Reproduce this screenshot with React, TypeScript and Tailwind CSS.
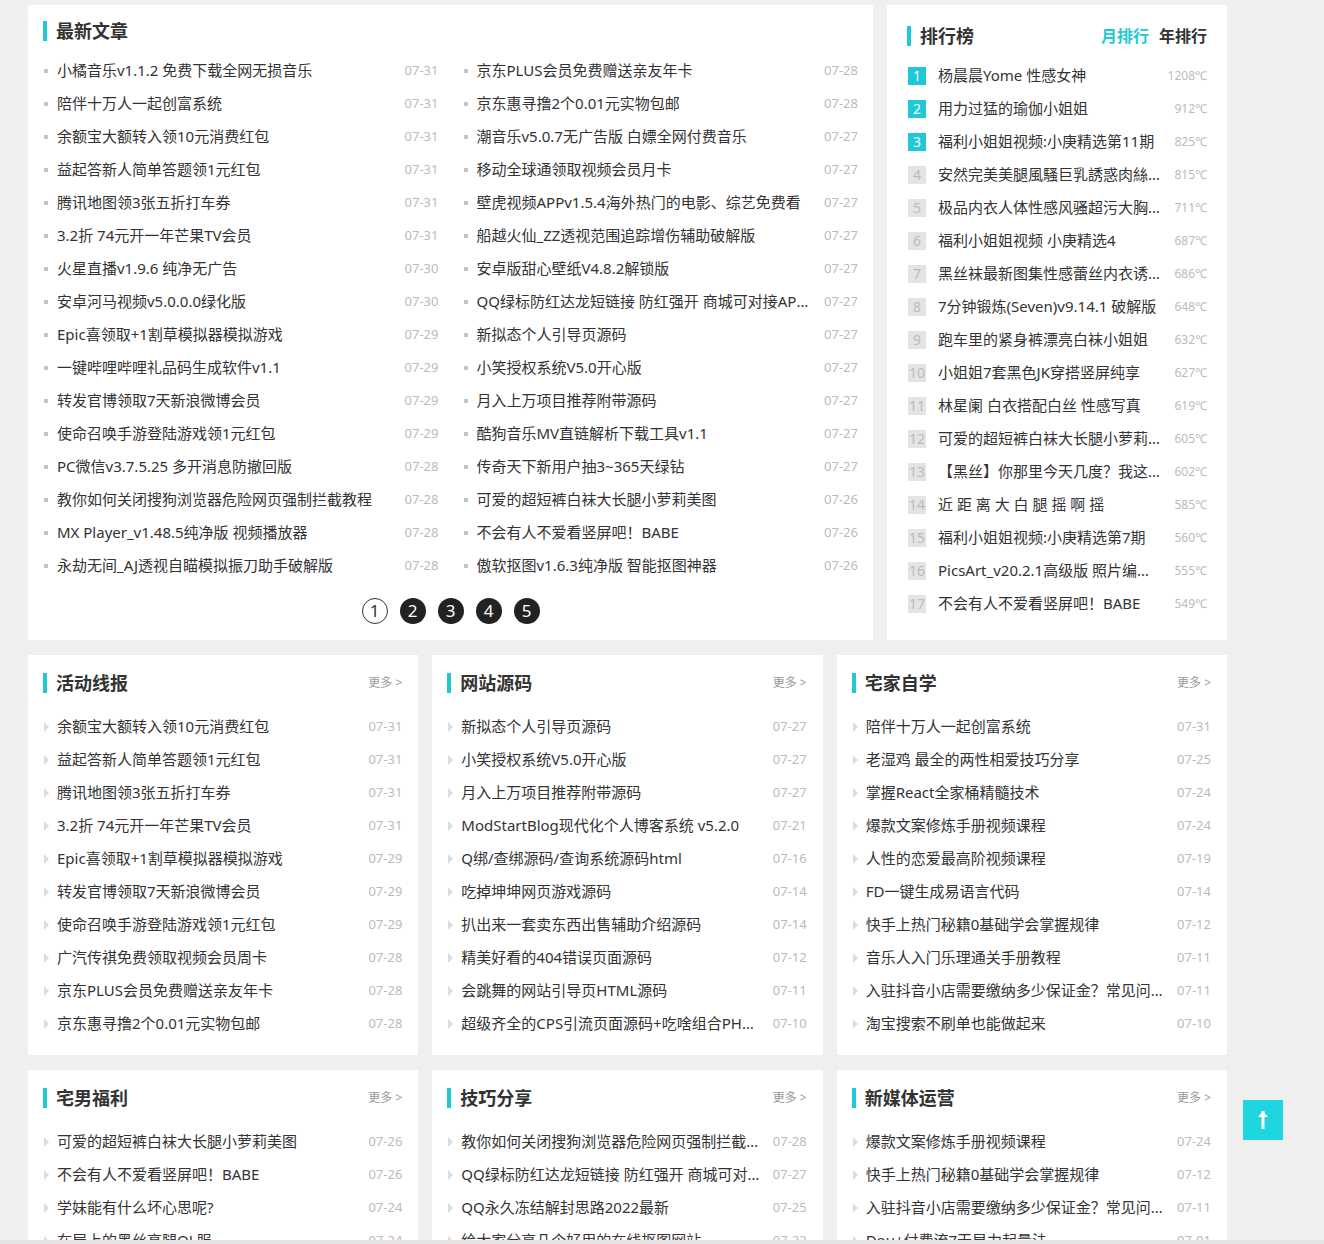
import React from 'react';

type Item = [string, string];

const latestLeft: Item[] = [
  ['小橘音乐v1.1.2 免费下载全网无损音乐', '07-31'],
  ['陪伴十万人一起创富系统', '07-31'],
  ['余额宝大额转入领10元消费红包', '07-31'],
  ['益起答新人简单答题领1元红包', '07-31'],
  ['腾讯地图领3张五折打车券', '07-31'],
  ['3.2折 74元开一年芒果TV会员', '07-31'],
  ['火星直播v1.9.6 纯净无广告', '07-30'],
  ['安卓河马视频v5.0.0.0绿化版', '07-30'],
  ['Epic喜领取+1割草模拟器模拟游戏', '07-29'],
  ['一键哔哩哔哩礼品码生成软件v1.1', '07-29'],
  ['转发官博领取7天新浪微博会员', '07-29'],
  ['使命召唤手游登陆游戏领1元红包', '07-29'],
  ['PC微信v3.7.5.25 多开消息防撤回版', '07-28'],
  ['教你如何关闭搜狗浏览器危险网页强制拦截教程', '07-28'],
  ['MX Player_v1.48.5纯净版 视频播放器', '07-28'],
  ['永劫无间_AJ透视自瞄模拟振刀助手破解版', '07-28'],
];

const latestRight: Item[] = [
  ['京东PLUS会员免费赠送亲友年卡', '07-28'],
  ['京东惠寻撸2个0.01元实物包邮', '07-28'],
  ['潮音乐v5.0.7无广告版 白嫖全网付费音乐', '07-27'],
  ['移动全球通领取视频会员月卡', '07-27'],
  ['壁虎视频APPv1.5.4海外热门的电影、综艺免费看', '07-27'],
  ['船越火仙_ZZ透视范围追踪增伤辅助破解版', '07-27'],
  ['安卓版甜心壁纸V4.8.2解锁版', '07-27'],
  ['QQ绿标防红达龙短链接 防红强开 商城可对接API接口', '07-27'],
  ['新拟态个人引导页源码', '07-27'],
  ['小笑授权系统V5.0开心版', '07-27'],
  ['月入上万项目推荐附带源码', '07-27'],
  ['酷狗音乐MV直链解析下载工具v1.1', '07-27'],
  ['传奇天下新用户抽3~365天绿钻', '07-27'],
  ['可爱的超短裤白袜大长腿小萝莉美图', '07-26'],
  ['不会有人不爱看竖屏吧！BABE', '07-26'],
  ['傲软抠图v1.6.3纯净版 智能抠图神器', '07-26'],
];

const ranking: Item[] = [
  ['杨晨晨Yome 性感女神', '1208℃'],
  ['用力过猛的瑜伽小姐姐', '912℃'],
  ['福利小姐姐视频:小庚精选第11期', '825℃'],
  ['安然完美美腿風騷巨乳誘惑肉絲美腿', '815℃'],
  ['极品内衣人体性感风骚超污大胸美女', '711℃'],
  ['福利小姐姐视频 小庚精选4', '687℃'],
  ['黑丝袜最新图集性感蕾丝内衣诱惑', '686℃'],
  ['7分钟锻炼(Seven)v9.14.1 破解版', '648℃'],
  ['跑车里的紧身裤漂亮白袜小姐姐', '632℃'],
  ['小姐姐7套黑色JK穿搭竖屏纯享', '627℃'],
  ['林星阑 白衣搭配白丝 性感写真', '619℃'],
  ['可爱的超短裤白袜大长腿小萝莉美图', '605℃'],
  ['【黑丝】你那里今天几度？我这里很热', '602℃'],
  ['近 距 离 大 白 腿 摇 啊 摇', '585℃'],
  ['福利小姐姐视频:小庚精选第7期', '560℃'],
  ['PicsArt_v20.2.1高级版 照片编辑器', '555℃'],
  ['不会有人不爱看竖屏吧！BABE', '549℃'],
];

const sections: { title: string; items: Item[] }[] = [
  {
    title: '活动线报',
    items: [
      ['余额宝大额转入领10元消费红包', '07-31'],
      ['益起答新人简单答题领1元红包', '07-31'],
      ['腾讯地图领3张五折打车券', '07-31'],
      ['3.2折 74元开一年芒果TV会员', '07-31'],
      ['Epic喜领取+1割草模拟器模拟游戏', '07-29'],
      ['转发官博领取7天新浪微博会员', '07-29'],
      ['使命召唤手游登陆游戏领1元红包', '07-29'],
      ['广汽传祺免费领取视频会员周卡', '07-28'],
      ['京东PLUS会员免费赠送亲友年卡', '07-28'],
      ['京东惠寻撸2个0.01元实物包邮', '07-28'],
    ],
  },
  {
    title: '网站源码',
    items: [
      ['新拟态个人引导页源码', '07-27'],
      ['小笑授权系统V5.0开心版', '07-27'],
      ['月入上万项目推荐附带源码', '07-27'],
      ['ModStartBlog现代化个人博客系统 v5.2.0', '07-21'],
      ['Q绑/查绑源码/查询系统源码html', '07-16'],
      ['吃掉坤坤网页游戏源码', '07-14'],
      ['扒出来一套卖东西出售辅助介绍源码', '07-14'],
      ['精美好看的404错误页面源码', '07-12'],
      ['会跳舞的网站引导页HTML源码', '07-11'],
      ['超级齐全的CPS引流页面源码+吃啥组合PHP源码', '07-10'],
    ],
  },
  {
    title: '宅家自学',
    items: [
      ['陪伴十万人一起创富系统', '07-31'],
      ['老湿鸡 最全的两性相爱技巧分享', '07-25'],
      ['掌握React全家桶精髓技术', '07-24'],
      ['爆款文案修炼手册视频课程', '07-24'],
      ['人性的恋爱最高阶视频课程', '07-19'],
      ['FD一键生成易语言代码', '07-14'],
      ['快手上热门秘籍0基础学会掌握规律', '07-12'],
      ['音乐人入门乐理通关手册教程', '07-11'],
      ['入驻抖音小店需要缴纳多少保证金？常见问题', '07-11'],
      ['淘宝搜索不刷单也能做起来', '07-10'],
    ],
  },
  {
    title: '宅男福利',
    items: [
      ['可爱的超短裤白袜大长腿小萝莉美图', '07-26'],
      ['不会有人不爱看竖屏吧！BABE', '07-26'],
      ['学妹能有什么坏心思呢?', '07-24'],
      ['在屋上的黑丝高腿OL服', '07-24'],
      ['小姐姐7套黑色JK穿搭竖屏纯享', '07-22'],
    ],
  },
  {
    title: '技巧分享',
    items: [
      ['教你如何关闭搜狗浏览器危险网页强制拦截教程', '07-28'],
      ['QQ绿标防红达龙短链接 防红强开 商城可对接API', '07-27'],
      ['QQ永久冻结解封思路2022最新', '07-25'],
      ['给大家分享几个好用的在线抠图网站', '07-22'],
      ['微信聊天记录恢复方法分享', '07-20'],
    ],
  },
  {
    title: '新媒体运营',
    items: [
      ['爆款文案修炼手册视频课程', '07-24'],
      ['快手上热门秘籍0基础学会掌握规律', '07-12'],
      ['入驻抖音小店需要缴纳多少保证金？常见问题', '07-11'],
      ['Dou+付费流7天早力起量法', '07-01'],
      ['短视频运营从入门到精通', '06-28'],
    ],
  },
];

const font = { fontFamily: '"Noto Sans", "Noto Sans CJK SC", sans-serif' };

function Title({ text }: { text: string }) {
  return (
    <div className="flex items-center">
      <span className="w-[4px] h-[20px] bg-[#1ec8d4] mr-[9px]" />
      <span className="text-[18px] font-bold text-[#333] leading-[30px]">{text}</span>
    </div>
  );
}

function SquareRow({ item }: { item: Item }) {
  return (
    <li className="flex items-center h-[33px]">
      <span className="w-[4px] h-[4px] bg-[#c4c4c4] ml-[1px] mr-[9px] shrink-0" />
      <span className="flex-1 truncate text-[15px] text-[#333] pr-[12px]">{item[0]}</span>
      <span className="text-[13px] text-[#bbb] shrink-0">{item[1]}</span>
    </li>
  );
}

function ArrowRow({ item }: { item: Item }) {
  return (
    <li className="flex items-center h-[33px]">
      <span className="w-0 h-0 ml-[1px] mr-[8px] shrink-0 border-y-[5px] border-y-transparent border-l-[5px] border-l-[#dcdcdc]" />
      <span className="flex-1 truncate text-[15px] text-[#333] pr-[12px]">{item[0]}</span>
      <span className="text-[13px] text-[#bbb] shrink-0">{item[1]}</span>
    </li>
  );
}

function Section({ title, items }: { title: string; items: Item[] }) {
  return (
    <div className="bg-white pt-[13px] pb-[15px] pl-[15px] pr-[16px]">
      <div className="flex items-center justify-between">
        <Title text={title} />
        <span className="text-[12px] text-[#999]">更多 &gt;</span>
      </div>
      <ul className="mt-[12px]">
        {items.map((it, i) => (
          <ArrowRow key={i} item={it} />
        ))}
      </ul>
    </div>
  );
}

export default function App() {
  return (
    <div className="min-h-screen bg-[#efefef] pt-[5px] pl-[28px] pb-[40px]" style={font}>
      <div className="w-[1199px] flex flex-col gap-[15px]">
        <div className="flex gap-[14px]">
          {/* latest articles */}
          <div className="w-[845px] bg-white px-[15px] pt-[11px] pb-[16px]">
            <Title text="最新文章" />
            <div className="grid grid-cols-2 gap-x-[24px] mt-[8px]">
              <ul>
                {latestLeft.map((it, i) => (
                  <SquareRow key={i} item={it} />
                ))}
              </ul>
              <ul>
                {latestRight.map((it, i) => (
                  <SquareRow key={i} item={it} />
                ))}
              </ul>
            </div>
            <div className="flex justify-center gap-[12px] mt-[16px]">
              {[1, 2, 3, 4, 5].map((n) => (
                <span
                  key={n}
                  className={
                    n === 1
                      ? 'w-[26px] h-[26px] rounded-full border border-[#333] bg-white text-[#333] text-[17px] flex items-center justify-center'
                      : 'w-[26px] h-[26px] rounded-full bg-[#222] text-white text-[17px] flex items-center justify-center'
                  }
                >
                  {n}
                </span>
              ))}
            </div>
          </div>

          {/* ranking */}
          <div className="w-[340px] bg-white px-[20px] pt-[16px] pb-[19px]">
            <div className="flex items-center justify-between">
              <Title text="排行榜" />
              <div className="flex gap-[10px] text-[16px] font-bold">
                <span className="text-[#1ec8d4]">月排行</span>
                <span className="text-[#333]">年排行</span>
              </div>
            </div>
            <ul className="mt-[8px]">
              {ranking.map((it, i) => (
                <li key={i} className="flex items-center h-[33px]">
                  <span
                    className={
                      i < 3
                        ? 'w-[18px] h-[18px] shrink-0 ml-[1px] mr-[12px] bg-[#1ec8d4] text-white text-[14px] flex items-center justify-center'
                        : 'w-[18px] h-[18px] shrink-0 ml-[1px] mr-[12px] bg-[#e4e4e4] text-[#bbb] text-[14px] flex items-center justify-center'
                    }
                  >
                    {i + 1}
                  </span>
                  <span className="flex-1 truncate text-[15px] text-[#333]">{it[0]}</span>
                  <span className="w-[47px] shrink-0 text-right text-[12px] text-[#bbb]">{it[1]}</span>
                </li>
              ))}
            </ul>
          </div>
        </div>

        <div className="grid grid-cols-3 gap-x-[14px] gap-y-[15px]">
          {sections.map((s) => (
            <Section key={s.title} title={s.title} items={s.items} />
          ))}
        </div>
      </div>

      <button className="fixed right-[41px] bottom-[104px] w-[40px] h-[40px] bg-[#1ed5e0] flex items-center justify-center">
        <svg width="14" height="22" viewBox="0 0 14 22" fill="none">
          <path d="M7 2 L7 20" stroke="white" strokeWidth="3" />
          <path d="M2 8 L7 2 L12 8 Z" fill="white" />
        </svg>
      </button>
      <div className="fixed left-0 right-0 bottom-0 h-[4px] bg-[#e7e3e3]" />
    </div>
  );
}
